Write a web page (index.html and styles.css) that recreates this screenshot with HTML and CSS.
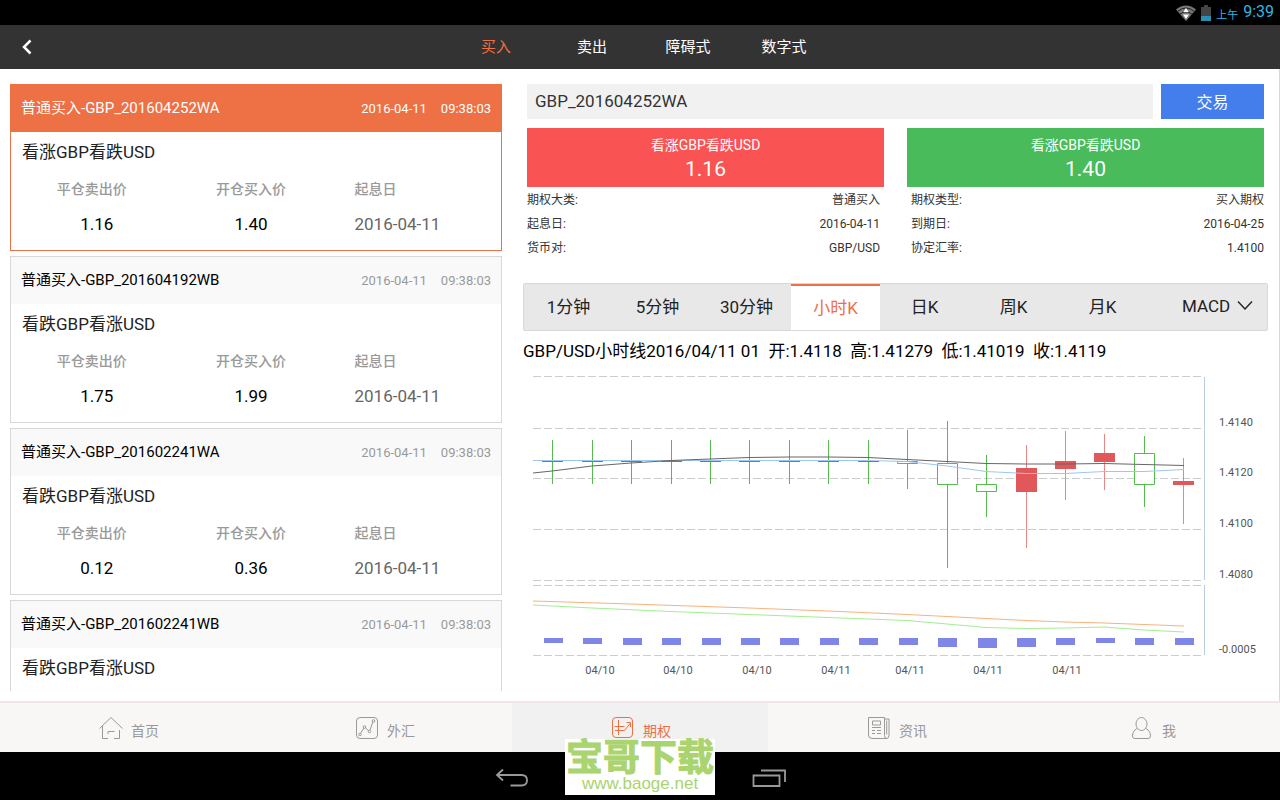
FILE: index.html
```html
<!DOCTYPE html>
<html lang="zh-CN">
<head>
<meta charset="utf-8">
<meta name="viewport" content="width=device-width, initial-scale=1">
<title>期权</title>
<link rel="stylesheet" href="styles.css">
</head>
<body>
<div class="status-bar">
  <svg class="status-icon" width="20" height="16" viewBox="0 0 20 16" aria-hidden="true">
    <path d="M10 16 0 4.500Q10-3.500 20 4.500Z" fill="#777"/>
    <path d="M1.500 6.500Q10-.5 18.500 6.500M4 9.300Q10 4 16 9.300" fill="none" stroke="#222" stroke-width="1"/>
    <path d="M10 3 12.700 7H7.300ZM10 14 7 9.500H13Z" fill="#fff"/>
  </svg>
  <svg class="status-icon" width="10" height="16" viewBox="0 0 10 16" aria-hidden="true">
    <path d="M3 0h4v2h3v14H0V2h3Z" fill="#444"/>
    <path d="M0 11h10v5H0Z" fill="#2d8fb0"/>
  </svg>
  <span class="status-period">上午</span>
  <span class="status-time">9:39</span>
</div>

<header class="header">
  <button class="back" type="button" aria-label="返回">
    <svg width="10" height="16" viewBox="0 0 10 16" aria-hidden="true"><path d="M8.500 1.500 2 8l6.500 6.500" fill="none" stroke="#fff" stroke-width="2.500"/></svg>
  </button>
  <nav class="header-nav">
    <a class="header-link is-active" href="#buy">买入</a>
    <a class="header-link" href="#sell">卖出</a>
    <a class="header-link" href="#barrier">障碍式</a>
    <a class="header-link" href="#digital">数字式</a>
  </nav>
</header>

<main class="main">
  <section class="list" aria-label="期权列表">
    <article class="card is-selected">
      <div class="card-head"><h2 class="card-name">普通买入-GBP_201604252WA</h2><span class="card-stamp"><span>2016-04-11</span><span>09:38:03</span></span></div>
      <h3 class="card-title">看涨GBP看跌USD</h3>
      <table class="card-table">
        <tr><th>平仓卖出价</th><th>开仓买入价</th><th>起息日</th></tr>
        <tr><td>1.16</td><td>1.40</td><td>2016-04-11</td></tr>
      </table>
    </article>
    <article class="card">
      <div class="card-head"><h2 class="card-name">普通买入-GBP_201604192WB</h2><span class="card-stamp"><span>2016-04-11</span><span>09:38:03</span></span></div>
      <h3 class="card-title">看跌GBP看涨USD</h3>
      <table class="card-table">
        <tr><th>平仓卖出价</th><th>开仓买入价</th><th>起息日</th></tr>
        <tr><td>1.75</td><td>1.99</td><td>2016-04-11</td></tr>
      </table>
    </article>
    <article class="card">
      <div class="card-head"><h2 class="card-name">普通买入-GBP_201602241WA</h2><span class="card-stamp"><span>2016-04-11</span><span>09:38:03</span></span></div>
      <h3 class="card-title">看跌GBP看涨USD</h3>
      <table class="card-table">
        <tr><th>平仓卖出价</th><th>开仓买入价</th><th>起息日</th></tr>
        <tr><td>0.12</td><td>0.36</td><td>2016-04-11</td></tr>
      </table>
    </article>
    <article class="card">
      <div class="card-head"><h2 class="card-name">普通买入-GBP_201602241WB</h2><span class="card-stamp"><span>2016-04-11</span><span>09:38:03</span></span></div>
      <h3 class="card-title">看跌GBP看涨USD</h3>
      <div class="card-rest"></div>
    </article>
  </section>

  <section class="detail" aria-label="期权详情">
    <form class="trade">
      <input class="trade-code" type="text" value="GBP_201604252WA" aria-label="期权代码">
      <button class="trade-button" type="button">交易</button>
    </form>
    <div class="quotes">
      <button class="quote quote-sell" type="button"><span class="quote-name">看涨GBP看跌USD</span><span class="quote-price">1.16</span></button>
      <button class="quote quote-buy" type="button"><span class="quote-name">看涨GBP看跌USD</span><span class="quote-price">1.40</span></button>
    </div>
    <div class="facts">
      <dl class="fact-list">
        <div class="fact"><dt>期权大类:</dt><dd>普通买入</dd></div>
        <div class="fact"><dt>起息日:</dt><dd>2016-04-11</dd></div>
        <div class="fact"><dt>货币对:</dt><dd>GBP/USD</dd></div>
      </dl>
      <dl class="fact-list">
        <div class="fact"><dt>期权类型:</dt><dd>买入期权</dd></div>
        <div class="fact"><dt>到期日:</dt><dd>2016-04-25</dd></div>
        <div class="fact"><dt>协定汇率:</dt><dd>1.4100</dd></div>
      </dl>
    </div>

    <div class="periods">
      <button class="period" type="button">1分钟</button>
      <button class="period" type="button">5分钟</button>
      <button class="period" type="button">30分钟</button>
      <button class="period is-active" type="button">小时K</button>
      <button class="period" type="button">日K</button>
      <button class="period" type="button">周K</button>
      <button class="period" type="button">月K</button>
      <div class="indicator">
        <select class="indicator-select" aria-label="指标"><option>MACD</option></select>
        <svg class="indicator-arrow" width="16" height="9" viewBox="0 0 16 9" aria-hidden="true"><path d="M1 .5 8 8 15 .5" fill="none" stroke="#222" stroke-width="1.400"/></svg>
      </div>
    </div>

    <p class="summary">GBP/USD小时线2016/04/11 01&nbsp; 开:1.4118&nbsp; 高:1.41279&nbsp; 低:1.41019&nbsp; 收:1.4119</p>

    <svg class="chart" viewBox="523 371 745 310" role="img" aria-label="GBP/USD 小时K线图">
      <path class="grid" d="M533 376.500H1201M533 428.500H1201M533 478.500H1201M533 529.500H1201M533 580.500H1201M533 585.500H1201M533 655.500H1201"/>
      <path class="axis" d="M1204.500 377V580M1204.500 585V655"/>
      <path class="bars" d="M544 638h19v5h-19ZM583 638h19v6h-19ZM623 638h19v7h-19ZM662 638h19v7h-19ZM702 638h19v7h-19ZM741 638h19v7h-19ZM780 638h19v7h-19ZM820 638h19v7h-19ZM859 638h19v7h-19ZM899 638h19v7h-19ZM938 638h19v9h-19ZM978 638h19v10h-19ZM1017 638h19v9h-19ZM1056 638h19v7h-19ZM1096 638h19v5h-19ZM1135 638h19v7h-19ZM1175 638h19v7h-19Z"/>
      <path class="down" d="M552.500 440v44M592.500 440v44M631.500 440v44M671.500 440v44M710.500 440v44M749.500 440v44M789.500 440v44M828.500 440v44M868.500 440v44M907.500 430v31M907.500 464v25M947.500 421v42M947.500 485v83M986.500 455v29M986.500 492v25M1144.500 436v17M1144.500 485v22"/>
      <path class="down down-body" d="M897.500 461.500h20v2h-20ZM937.500 463.500h20v21h-20ZM976.500 484.500h20v7h-20ZM1134.500 453.500h20v31h-20Z"/>
      <path class="up-wick" d="M1026.500 445V548M1065.500 431V500M1104.500 434V490M1183.500 458V524"/>
      <path class="up-body" d="M1016 468h21v24h-21ZM1055 461h21v8h-21ZM1094 453h21v9h-21ZM1173 481h21v4h-21Z"/>
      <polyline class="line-fast" points="533,460.500 868,460.500 907,461.500 947,466 986,471.500 1026,473.500 1065,473.500 1104,471.500 1144,471.500 1184,469.500"/>
      <path class="flat" d="M542 461.500h21M582 461.500h21M621 461.500h21M661 461.500h21M700 461.500h21M739 461.500h21M779 461.500h21M818 461.500h21M858 461.500h21"/>
      <polyline class="line-slow" points="533,473 552,471 592,466 631,463 671,460.500 710,459 749,457.500 789,457 828,457 868,457.500 907,459.500 947,461.500 986,463.500 1026,464 1065,464 1104,463.500 1144,464.500 1184,465.500"/>
      <polyline class="line-dea" points="533,601 631,604 749,608 828,611 907,614.500 947,616.500 986,618.500 1026,620.500 1065,622 1104,623 1144,624.500 1184,626"/>
      <polyline class="line-dif" points="533,605 592,608 671,611.500 749,614.500 828,617.500 907,620.500 947,624 986,627.500 1026,628.500 1065,628 1104,627 1144,630 1184,632"/>
      <g class="tick">
        <text x="1219" y="426">1.4140</text>
        <text x="1219" y="476">1.4120</text>
        <text x="1219" y="527">1.4100</text>
        <text x="1219" y="578">1.4080</text>
        <text x="1219" y="653">-0.0005</text>
      </g>
      <g class="tick tick-date">
        <text x="600" y="674">04/10</text>
        <text x="678" y="674">04/10</text>
        <text x="757" y="674">04/10</text>
        <text x="836" y="674">04/11</text>
        <text x="910" y="674">04/11</text>
        <text x="988" y="674">04/11</text>
        <text x="1067" y="674">04/11</text>
      </g>
    </svg>
  </section>
</main>

<nav class="tabs">
  <a class="tab" href="#home">
    <svg class="tab-icon" viewBox="0 0 24 24" aria-hidden="true"><path d="M.5 12.500 12 1.500 23.500 12.500M3.500 10v12.500H9M9 17v-1.500h6.500M9 17v1M15 22.500h5.500V14"/></svg>
    <span class="tab-label">首页</span>
  </a>
  <a class="tab" href="#forex">
    <svg class="tab-icon" viewBox="0 0 24 24" aria-hidden="true"><rect x="1.500" y="1.500" width="21" height="21" rx="3.500"/><path d="M5.700 17 9 12M10.500 12l3.500 3M15 14l2.800-8"/><circle cx="5" cy="18.500" r="1.300"/><circle cx="9.500" cy="11" r="1.300"/><circle cx="14.500" cy="15.500" r="1.300"/><circle cx="18.500" cy="5" r="1.300"/></svg>
    <span class="tab-label">外汇</span>
  </a>
  <a class="tab is-active" href="#options">
    <svg class="tab-icon" viewBox="0 0 24 24" aria-hidden="true"><rect x="1.500" y="1.500" width="20" height="20" rx="3.500"/><path d="M7.500 4v15M3.500 10.500h10M4 14.500h9.500L19.500 7M15.500 6.500H19.500V11"/></svg>
    <span class="tab-label">期权</span>
  </a>
  <a class="tab" href="#news">
    <svg class="tab-icon" viewBox="0 0 24 24" aria-hidden="true"><path d="M1.500 1.500h16v18q0 3 2.500 3H5q-3.500 0-3.500-3.500ZM17.500 3h4.500v16.500q0 3-2.500 3M5.500 5h8v4h-8ZM19.700 4.500v14M5 11.500h9M5 14.500h3M10 14.500h4M5 17.500h3M10 17.500h4"/></svg>
    <span class="tab-label">资讯</span>
  </a>
  <a class="tab" href="#me">
    <svg class="tab-icon" viewBox="0 0 24 24" aria-hidden="true"><ellipse cx="11.500" cy="8" rx="5.500" ry="6.500"/><path d="M7 12.500Q2.500 15 2.500 20 2.500 22.500 5 22.500H18Q20.500 22.500 20.500 20 20.500 15 16 12.500"/></svg>
    <span class="tab-label">我</span>
  </a>
</nav>

<footer class="system-bar">
  <button class="system-button" type="button" aria-label="返回">
    <svg width="34" height="20" viewBox="0 0 34 20" aria-hidden="true"><path d="M8 1.500 2 7l6 5.500M2 7h24.500q5.500 0 5.500 5.200t-5.500 5.300H15.500" fill="none" stroke="#999" stroke-width="1.800"/></svg>
  </button>
  <button class="system-button" type="button" aria-label="最近任务">
    <svg width="34" height="20" viewBox="0 0 34 20" aria-hidden="true"><path d="M1.500 7.500h26v10.500h-26ZM9 2.500h24V14" fill="none" stroke="#999" stroke-width="1.800"/></svg>
  </button>
  <div class="watermark"><span class="watermark-name">宝哥下载</span><span class="watermark-site">www.baoge.net</span></div>
</footer>
</body>
</html>
```

FILE: styles.css
```css
* { box-sizing: border-box; }
body {
  margin: 0;
  height: 100vh;
  display: flex;
  flex-direction: column;
  overflow: hidden;
  background: #fff;
  color: #222;
  font-family: Roboto, "Noto Sans CJK SC", sans-serif;
  font-size: 17px;
}
button, input, select { font: inherit; color: inherit; border: 0; border-radius: 0; margin: 0; padding: 0; background: none; }
a { color: inherit; text-decoration: none; }
h2, h3, p, dl, dd { margin: 0; font-weight: 400; }

.status-bar {
  flex: none;
  height: 25px;
  padding-right: 6px;
  display: flex;
  align-items: center;
  justify-content: flex-end;
  gap: 5px;
  background: #000;
  color: #33b5e5;
}
.status-period { font-size: 11px; padding-top: 2px; }
.status-time { font-size: 16px; padding-bottom: 2px; }

.header {
  flex: none;
  height: 44px;
  display: grid;
  grid-template-columns: 1fr auto 1fr;
  background: #333;
  color: #fff;
  font-size: 15px;
}
.back { justify-self: start; padding: 0 22px; display: flex; align-items: center; }
.header-nav { display: flex; }
.header-link { width: 96px; line-height: 44px; text-align: center; }
.header-link.is-active { color: #ee7045; }

.main {
  flex: 1;
  min-height: 0;
  display: grid;
  grid-template-columns: 492fr 745fr;
  gap: 21px;
  padding: 15px 11px 10px 10px;
  border-right: 1px solid #d8d8d8;
}
.list { min-height: 0; overflow: hidden; display: flex; flex-direction: column; gap: 5px; }
.card { flex: none; border: 1px solid #d8d8d8; padding-bottom: 8px; }
.card-head {
  height: 47px;
  padding: 0 10px;
  display: flex;
  align-items: center;
  justify-content: space-between;
  background: #f9f9f9;
  color: #000;
}
.card-name { font-size: 15px; padding-bottom: 4px; }
.card-stamp { display: flex; gap: 14px; font-size: 13px; color: #999; }
.card-title { font-size: 17px; line-height: 40px; padding-left: 11px; }
.card-table { width: 100%; table-layout: fixed; border-collapse: collapse; text-align: center; }
.card-table th { padding: 0 0 3px; height: 34px; font-size: 14px; font-weight: 500; color: #999; }
.card-table td { padding: 0; height: 36px; color: #000; }
.card-table th:nth-child(1) { width: 33%; }
.card-table th:nth-child(2) { width: 32%; }
.card-table td:first-child { padding-left: 10px; }
.card-table th:last-child, .card-table td:last-child { text-align: left; padding-left: 25px; }
.card-table td:last-child { color: #666; }
.card-rest { height: 70px; }
.is-selected { border-color: #ee7045; }
.is-selected .card-head { background: #ee7045; color: #fff; }
.is-selected .card-stamp { color: #fff; }

.trade { display: flex; gap: 8px; padding: 0 4px; }
.trade-code { flex: 1; min-width: 0; height: 35px; padding: 0 8px 2px; background: #f1f1f1; color: #333; }
.trade-button { width: 14%; height: 35px; padding-bottom: 2px; background: #447eec; color: #fff; font-size: 16px; }
.quotes { display: grid; grid-template-columns: 1fr 1fr; gap: 23px; padding: 9px 4px 0; }
.quote { height: 59px; display: flex; flex-direction: column; align-items: center; justify-content: center; color: #fff; }
.quote-sell { background: #f95353; }
.quote-buy { background: #49bb5a; }
.quote-name { font-size: 14px; line-height: 22px; }
.quote-price { font-size: 21px; line-height: 26px; }
.facts { display: grid; grid-template-columns: 1fr 1fr; gap: 31px; padding: 1px 4px 0; font-size: 12px; color: #333; }
.fact { display: flex; justify-content: space-between; line-height: 24px; }

.periods {
  display: grid;
  grid-template-columns: repeat(7, 89fr) 120fr;
  height: 48px;
  margin-top: 23px;
  border: 1px solid #d8d8d8;
  border-radius: 2px;
  background: #e8e8e8;
}
.period { padding: 0 0 4px; }
.period.is-active { border-top: 2px solid #ee7045; background: #fff; color: #ee7045; }
.indicator { display: flex; align-items: center; justify-content: flex-end; padding: 0 14px 3px 0; }
.indicator-select { appearance: none; width: 55px; }
.indicator-arrow { pointer-events: none; }
.summary { line-height: 40px; color: #000; white-space: nowrap; }

.chart { display: block; width: 100%; height: auto; }
.chart path, .chart polyline { fill: none; stroke-width: 1; }
.chart .grid { stroke: #ccc; stroke-dasharray: 8 3; }
.chart .axis { stroke: #b9cce2; }
.chart .bars { fill: #8086e8; }
.chart .down { stroke: #55bb4c; }
.chart .down-body { fill: #fff; }
.chart .flat { stroke: #3fa050; }
.chart .up-wick { stroke: #e98584; }
.chart .up-body { fill: #e0585a; }
.chart .line-fast { stroke: #9dc6f0; }
.chart .line-slow { stroke: #666; }
.chart .line-dea { stroke: #f9b27c; }
.chart .line-dif { stroke: #a2ee93; }
.tick { font-size: 11px; fill: #555; }
.tick-date { text-anchor: middle; }

.tabs {
  flex: none;
  display: grid;
  grid-template-columns: repeat(5, 1fr);
  height: 51px;
  border-top: 2px solid #f0e6ea;
  background: #f8f7f5;
  color: #999;
  font-size: 14px;
}
.tab { display: flex; align-items: center; justify-content: center; gap: 8px; padding-left: 2px; }
.tab.is-active { background: #f1f1f1; color: #ee7045; }
.tab-icon { width: 24px; height: 24px; fill: none; stroke: currentColor; stroke-width: 1; }
.tab-label { padding-top: 4px; }

.system-bar {
  position: relative;
  flex: none;
  height: 48px;
  display: flex;
  align-items: center;
  justify-content: center;
  gap: 223px;
  background: #000;
}
.system-button { display: flex; padding-top: 3px; }
.watermark {
  position: absolute;
  left: 50%;
  bottom: 5px;
  width: 150px;
  height: 56px;
  margin-left: -75px;
  display: flex;
  flex-direction: column;
  align-items: center;
  justify-content: space-between;
  background: #fff;
  color: #a9d46e;
}
.watermark-name { font: 700 37px/32px "Noto Sans CJK SC", sans-serif; -webkit-text-stroke: 1px #a9d46e; }
.watermark-site { font: 17px/22px "Liberation Sans", sans-serif; }
```
